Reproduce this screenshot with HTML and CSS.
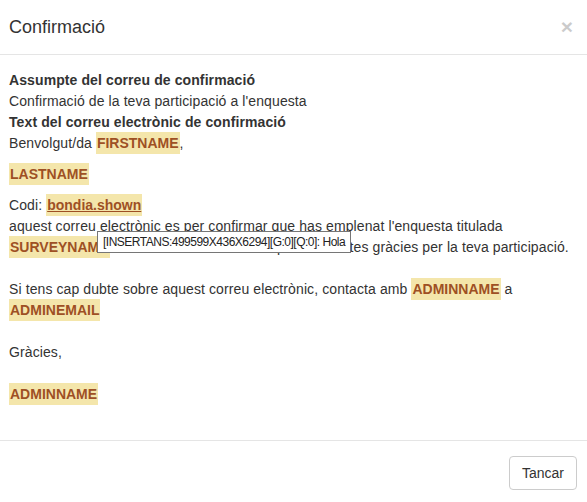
FILE: index.html
```html
<!DOCTYPE html>
<html lang="ca">
<head>
<meta charset="utf-8">
<title>Confirmació</title>
<link rel="stylesheet" href="styles.css">
</head>
<body>
<div class="modal">
  <div class="modal-header">
    <h4 class="modal-title">Confirmació</h4>
    <button class="close" type="button" aria-label="Close">×</button>
  </div>
  <div class="modal-body">
    <p><b>Assumpte del correu de confirmació</b><br>Confirmació de la teva participació a l'enquesta<br><b>Text del correu electrònic de confirmació</b><br>Benvolgut/da <span class="tok">FIRSTNAME</span>,</p>
    <p><span class="tok">LASTNAME</span></p>
    <p>Codi: <span class="tok link">bondia.shown</span><br>aquest correu electrònic es per confirmar que has emplenat l'enquesta titulada<br><span class="tok">SURVEYNAME</span> i s'han desat les teves respostes. Moltes gràcies per la teva participació.<br><br>Si tens cap dubte sobre aquest correu electrònic, contacta amb <span class="tok">ADMINNAME</span> a<br><span class="tok">ADMINEMAIL</span><br><br>Gràcies,<br><br><span class="tok">ADMINNAME</span></p>
    <div class="tooltip">[INSERTANS:499599X436X6294][G:0][Q:0]: Hola</div>
  </div>
  <div class="modal-footer">
    <button class="btn" type="button">Tancar</button>
  </div>
</div>
</body>
</html>
```
FILE: styles.css
```css
html, body {
  margin: 0;
  padding: 0;
  background: #fff;
}
body {
  font-family: "Liberation Sans", Arial, sans-serif;
  font-size: 14px;
  color: #333;
}
.modal {
  width: 587px;
}
.modal-header {
  display: flex;
  justify-content: space-between;
  align-items: flex-start;
  padding: 14px 14px 14px 9px;
  height: 26px;
  border-bottom: 1px solid #e5e5e5;
}
.modal-title {
  margin: 0;
  font-size: 18px;
  font-weight: normal;
  line-height: 26px;
  color: #333;
}
.close {
  margin: 0;
  padding: 0;
  border: 0;
  background: none;
  font-family: "Liberation Sans", Arial, sans-serif;
  font-size: 21px;
  font-weight: bold;
  line-height: 26px;
  color: #000;
  opacity: 0.2;
  text-shadow: 0 1px 0 #fff;
}
.modal-body {
  position: relative;
  padding: 15px 10px 25px 9px;
  line-height: 21px;
  letter-spacing: 0.1px;
}
.modal-body p {
  margin: 0 0 10px;
}
.tok {
  background: #f4e6ab;
  color: #9e5024;
  font-weight: bold;
  padding: 3px 1px;
  letter-spacing: 0;
}
.tok.link {
  text-decoration: underline;
}
.tooltip {
  position: absolute;
  left: 97px;
  top: 176px;
  width: 242px;
  height: 20px;
  padding: 0 5px;
  border: 1px solid #767676;
  background: #fff;
  color: #222;
  font-size: 12px;
  letter-spacing: -0.5px;
  line-height: 20px;
  white-space: nowrap;
}
.modal-footer {
  display: flex;
  justify-content: flex-end;
  padding: 15px 10px 15px 10px;
  border-top: 1px solid #e5e5e5;
}
.btn {
  font-family: "Liberation Sans", Arial, sans-serif;
  font-size: 14px;
  line-height: 20px;
  padding: 6px 12px;
  color: #333;
  background: #fff;
  border: 1px solid #ccc;
  border-radius: 4px;
}
```
